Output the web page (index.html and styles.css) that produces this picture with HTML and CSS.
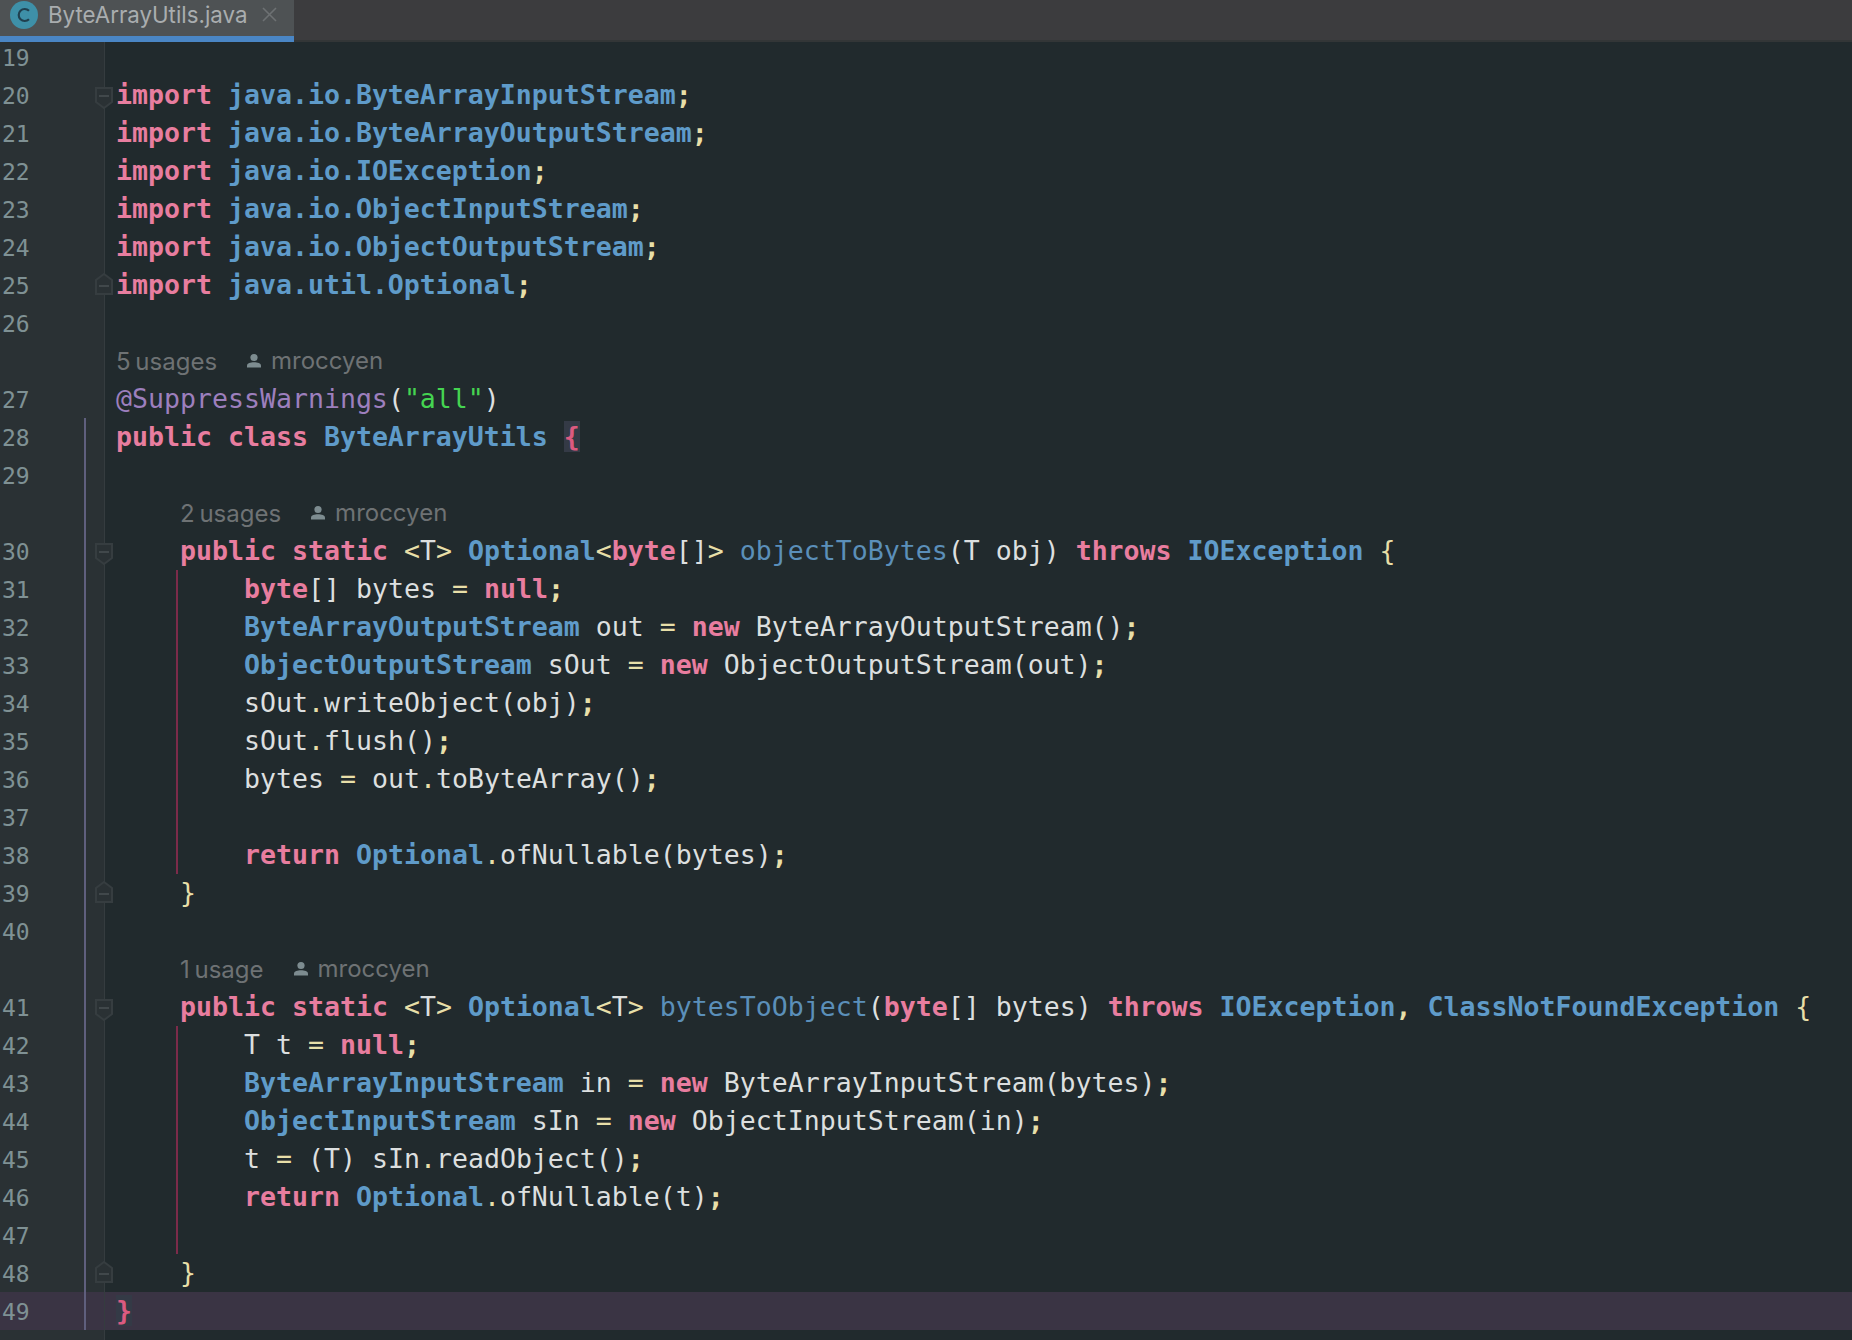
FILE: index.html
```html
<!DOCTYPE html>
<html lang="en">
<head>
    <meta charset="UTF-8">
    <title>ByteArrayUtils.java</title>
    <link rel="stylesheet" href="styles.css">
</head>
<body>
    <svg class="defs" width="0" height="0">
        <symbol id="fold-down" viewBox="0 0 18 22">
            <path d="M1 1H17V15L9 21L1 15Z" fill="#2a3134" stroke="#363d40" stroke-width="2"/>
            <path d="M4 9H14" stroke="#41484b" stroke-width="2"/>
        </symbol>
        <symbol id="fold-up" viewBox="0 0 18 22">
            <path d="M1 21H17V7L9 1L1 7Z" fill="#2a3134" stroke="#363d40" stroke-width="2"/>
            <path d="M4 13H14" stroke="#41484b" stroke-width="2"/>
        </symbol>
        <symbol id="person" viewBox="0 0 16 16">
            <circle cx="8" cy="4.5" r="3.6" fill="#7d8c90"/>
            <path d="M1 14.5V12.5C1 10.3 4.5 9.3 8 9.3S15 10.3 15 12.5V14.5Z" fill="#7d8c90"/>
        </symbol>
    </svg>

    <div class="tabs">
        <div class="tab">
            <span class="tab-icon">
                <svg width="16" height="16" viewBox="0 0 16 16"><path d="M13 3.8A6 6 0 1 0 13 12.2" fill="none" stroke="#20404f" stroke-width="2.2"/></svg>
            </span>
            <span class="tab-name">ByteArrayUtils.java</span>
            <svg class="tab-close" width="15" height="15" viewBox="0 0 15 15"><path d="M1 1L14 14M14 1L1 14" stroke="#6d7173" stroke-width="1.6"/></svg>
        </div>
    </div>

    <div class="editor">
        <div class="gutter">
            <div class="vcs-line"></div>
            <div class="num">19</div>
            <div class="num">20<svg class="fold"><use href="#fold-down"/></svg></div>
            <div class="num">21</div>
            <div class="num">22</div>
            <div class="num">23</div>
            <div class="num">24</div>
            <div class="num">25<svg class="fold up"><use href="#fold-up"/></svg></div>
            <div class="num">26</div>
            <div class="num"></div>
            <div class="num">27</div>
            <div class="num">28</div>
            <div class="num">29</div>
            <div class="num"></div>
            <div class="num">30<svg class="fold"><use href="#fold-down"/></svg></div>
            <div class="num">31</div>
            <div class="num">32</div>
            <div class="num">33</div>
            <div class="num">34</div>
            <div class="num">35</div>
            <div class="num">36</div>
            <div class="num">37</div>
            <div class="num">38</div>
            <div class="num">39<svg class="fold up"><use href="#fold-up"/></svg></div>
            <div class="num">40</div>
            <div class="num"></div>
            <div class="num">41<svg class="fold"><use href="#fold-down"/></svg></div>
            <div class="num">42</div>
            <div class="num">43</div>
            <div class="num">44</div>
            <div class="num">45</div>
            <div class="num">46</div>
            <div class="num">47</div>
            <div class="num">48<svg class="fold up"><use href="#fold-up"/></svg></div>
            <div class="num current">49</div>
        </div>

        <div class="code">
            <div class="guide guide-one"></div>
            <div class="guide guide-two"></div>
            <div class="line"></div>
            <div class="line"><b class="kw">import</b> <b class="ty">java.io.ByteArrayInputStream</b><b class="pu">;</b></div>
            <div class="line"><b class="kw">import</b> <b class="ty">java.io.ByteArrayOutputStream</b><b class="pu">;</b></div>
            <div class="line"><b class="kw">import</b> <b class="ty">java.io.IOException</b><b class="pu">;</b></div>
            <div class="line"><b class="kw">import</b> <b class="ty">java.io.ObjectInputStream</b><b class="pu">;</b></div>
            <div class="line"><b class="kw">import</b> <b class="ty">java.io.ObjectOutputStream</b><b class="pu">;</b></div>
            <div class="line"><b class="kw">import</b> <b class="ty">java.util.Optional</b><b class="pu">;</b></div>
            <div class="line"></div>
            <div class="hint"><span>5 usages</span><span class="author"><svg class="person"><use href="#person"/></svg>mroccyen</span></div>
            <div class="line"><span class="an">@SuppressWarnings</span>(<span class="st">"all"</span>)</div>
            <div class="line"><b class="kw">public class</b> <b class="ty">ByteArrayUtils</b> <b class="kw brace">{</b></div>
            <div class="line"></div>
            <div class="hint in1"><span>2 usages</span><span class="author"><svg class="person"><use href="#person"/></svg>mroccyen</span></div>
            <div class="line in1"><b class="kw">public static</b> <span class="ye">&lt;</span>T<span class="ye">&gt;</span> <b class="ty">Optional</b><span class="ye">&lt;</span><b class="kw">byte</b>[]<span class="ye">&gt;</span> <span class="me">objectToBytes</span>(T obj) <b class="kw">throws</b> <b class="ty">IOException</b> <span class="ye">{</span></div>
            <div class="line in2"><b class="kw">byte</b>[] bytes <span class="ye">=</span> <b class="kw">null</b><b class="pu">;</b></div>
            <div class="line in2"><b class="ty">ByteArrayOutputStream</b> out <span class="ye">=</span> <b class="kw">new</b> ByteArrayOutputStream()<b class="pu">;</b></div>
            <div class="line in2"><b class="ty">ObjectOutputStream</b> sOut <span class="ye">=</span> <b class="kw">new</b> ObjectOutputStream(out)<b class="pu">;</b></div>
            <div class="line in2">sOut<span class="ye">.</span>writeObject(obj)<b class="pu">;</b></div>
            <div class="line in2">sOut<span class="ye">.</span>flush()<b class="pu">;</b></div>
            <div class="line in2">bytes <span class="ye">=</span> out<span class="ye">.</span>toByteArray()<b class="pu">;</b></div>
            <div class="line"></div>
            <div class="line in2"><b class="kw">return</b> <b class="ty">Optional</b><span class="ye">.</span>ofNullable(bytes)<b class="pu">;</b></div>
            <div class="line in1"><span class="ye">}</span></div>
            <div class="line"></div>
            <div class="hint in1"><span>1 usage</span><span class="author"><svg class="person"><use href="#person"/></svg>mroccyen</span></div>
            <div class="line in1"><b class="kw">public static</b> <span class="ye">&lt;</span>T<span class="ye">&gt;</span> <b class="ty">Optional</b><span class="ye">&lt;</span>T<span class="ye">&gt;</span> <span class="me">bytesToObject</span>(<b class="kw">byte</b>[] bytes) <b class="kw">throws</b> <b class="ty">IOException</b><b class="pu">,</b> <b class="ty">ClassNotFoundException</b> <span class="ye">{</span></div>
            <div class="line in2">T t <span class="ye">=</span> <b class="kw">null</b><b class="pu">;</b></div>
            <div class="line in2"><b class="ty">ByteArrayInputStream</b> in <span class="ye">=</span> <b class="kw">new</b> ByteArrayInputStream(bytes)<b class="pu">;</b></div>
            <div class="line in2"><b class="ty">ObjectInputStream</b> sIn <span class="ye">=</span> <b class="kw">new</b> ObjectInputStream(in)<b class="pu">;</b></div>
            <div class="line in2">t <span class="ye">=</span> (T) sIn<span class="ye">.</span>readObject()<b class="pu">;</b></div>
            <div class="line in2"><b class="kw">return</b> <b class="ty">Optional</b><span class="ye">.</span>ofNullable(t)<b class="pu">;</b></div>
            <div class="line"></div>
            <div class="line in1"><span class="ye">}</span></div>
            <div class="line current"><b class="kw brace">}</b></div>
        </div>
    </div>
</body>
</html>
```

FILE: styles.css
```css
html, body {
    height: 100%;
}

body {
    margin: 0;
    overflow: hidden;
    display: flex;
    flex-direction: column;
    background-color: #212a2d;
    font-family: "DejaVu Sans Mono", monospace;
}

.defs {
    position: absolute;
}

/* tab strip */
.tabs {
    flex: none;
    height: 42px;
    box-sizing: border-box;
    background-color: #3c3c3e;
    border-bottom: 2px solid #333637;
}

.tab {
    width: 294px;
    height: 42px;
    box-sizing: border-box;
    display: flex;
    align-items: flex-start;
    background-color: #4e5254;
    border-bottom: 6px solid #4a86c5;
    padding: 0 0 0 10px;
}

.tab-icon {
    width: 28px;
    height: 28px;
    margin-top: 1px;
    border-radius: 50%;
    background-color: #3e90a8;
    display: flex;
    align-items: center;
    justify-content: center;
}

.tab-name {
    margin-left: 10px;
    font-family: Inter, sans-serif;
    font-size: 22.3px;
    line-height: 30px;
    color: #a9adaf;
}

.tab-close {
    margin: 7px 0 0 15px;
}

/* editor */
.editor {
    flex: 1;
    min-height: 0;
    display: flex;
    overflow: hidden;
}

.gutter {
    position: relative;
    flex: none;
    width: 104px;
    margin-top: -4px;
    background-color: #2a3134;
    border-right: 1px solid #353c3f;
}

.num {
    position: relative;
    height: 38px;
    padding-left: 2px;
    font-size: 23px;
    line-height: 40px;
    color: #7f9194;
}

.num.current {
    background-color: #3a3444;
}

.fold {
    position: absolute;
    left: 95px;
    top: 11px;
    width: 18px;
    height: 22px;
    z-index: 2;
}

.fold.up {
    top: 7px;
}

.vcs-line {
    position: absolute;
    left: 84px;
    top: 380px;
    width: 2px;
    height: 912px;
    background-color: #5f5f7d;
    z-index: 1;
}

.code {
    position: relative;
    flex: 1;
    margin-top: -4px;
    font-size: 26.57px;
    color: #dcdfdf;
}

.line, .hint {
    height: 38px;
    padding-left: 11px;
    line-height: 38px;
    white-space: pre;
}

.line.current {
    background-color: #3a3444;
}

.in1 {
    padding-left: 75px;
}

.in2 {
    padding-left: 139px;
}

.hint {
    display: flex;
    font-family: Inter, sans-serif;
    font-size: 24px;
    word-spacing: -2px;
    line-height: 40px;
    color: #6e7274;
}

.author {
    display: flex;
    align-items: center;
    margin-left: 29px;
}

.person {
    width: 16px;
    height: 16px;
    margin-right: 9px;
}

.guide {
    position: absolute;
    left: 71px;
    width: 2px;
    background-color: #7c2b4a;
}

.guide-one {
    top: 532px;
    height: 304px;
}

.guide-two {
    top: 988px;
    height: 228px;
}

/* syntax colours */
.kw {
    color: #e87d9f;
}

.ty {
    color: #5f9bc9;
}

.pu {
    color: #e8dfa8;
}

.ye {
    color: #e8dfa8;
}

.me {
    color: #5b8fb9;
}

.an {
    color: #9d7fbd;
}

.st {
    color: #45d451;
}

.brace {
    color: #dc5a80;
    background-color: #343a46;
}
```
